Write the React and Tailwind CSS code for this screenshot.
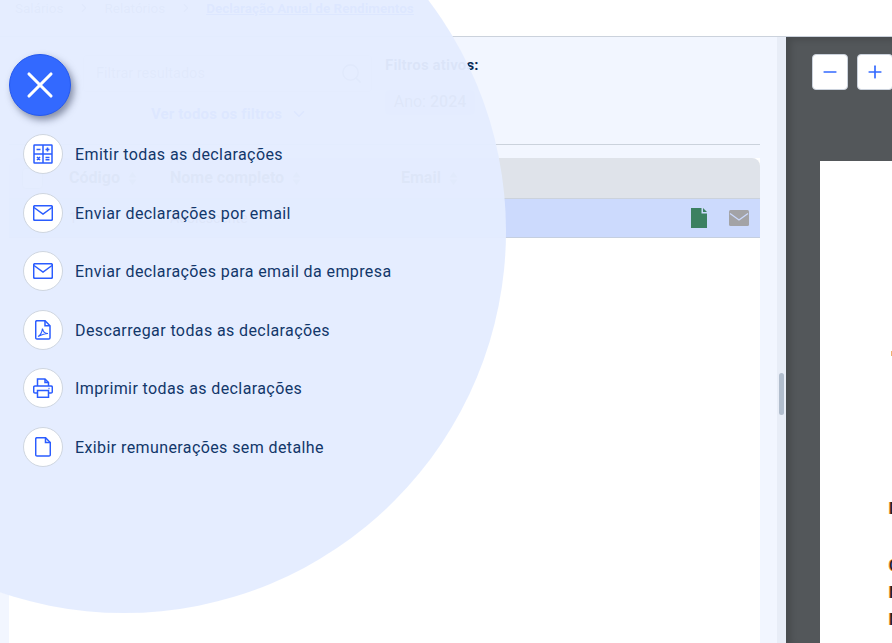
import React from 'react'
import { X, Search, ChevronRight, ChevronDown, Minus, Plus } from 'lucide-react'

const font = { fontFamily: 'Roboto, sans-serif' }

function CalcIcon() {
  return (
    <svg width="20" height="20" viewBox="0 0 20 20" fill="none" stroke="#2a5cff" strokeWidth="1.5">
      <rect x="1" y="1" width="18" height="18" rx="0.5" />
      <path d="M10 1v18M1 10h18" />
      <path d="M3.500 5.500h4M12.500 5.500h4M14.500 3.500v4M12.500 13.500h4M12.500 15.800h4M4 13l3 3M7 13l-3 3" strokeWidth="1.600" />
    </svg>
  )
}

function MailIcon() {
  return (
    <svg width="20" height="16" viewBox="0 0 20 16" fill="none" stroke="#2a5cff" strokeWidth="1.5">
      <rect x="0.700" y="0.700" width="18.600" height="14.600" rx="1.200" />
      <path d="M1 2.500l9 6.500 9-6.500" />
    </svg>
  )
}

function PdfIcon() {
  return (
    <svg width="16" height="20" viewBox="0 0 16 20" fill="none" stroke="#2a5cff" strokeWidth="1.5">
      <path d="M2 .7h8l5 5v12a1.300 1.300 0 0 1-1.300 1.300H2A1.300 1.300 0 0 1 .7 17.700V2A1.300 1.300 0 0 1 2 .7z" />
      <path d="M10 .7v5h5" />
      <path d="M3 16.500c2-1 4-4.500 4.500-8 .5 3 2.500 5 5.500 5-3 0-6 1-10 3z" strokeWidth="1.200" />
    </svg>
  )
}

function PrintIcon() {
  return (
    <svg width="20" height="20" viewBox="0 0 20 20" fill="none" stroke="#2a5cff" strokeWidth="1.5">
      <path d="M4.500 8V1h7.500l3.500 3.500V8" />
      <path d="M12 1v3.500h3.500" />
      <path d="M4.500 15H2a1.300 1.300 0 0 1-1.300-1.300V9.300A1.300 1.300 0 0 1 2 8h16a1.300 1.300 0 0 1 1.300 1.300v4.400A1.300 1.300 0 0 1 18 15h-2.500" />
      <rect x="4.500" y="12.500" width="11" height="6.800" />
      <path d="M15.500 10.500h1" strokeWidth="1.600" />
    </svg>
  )
}

function FileIcon() {
  return (
    <svg width="16" height="20" viewBox="0 0 16 20" fill="none" stroke="#2a5cff" strokeWidth="1.5">
      <path d="M2 .7h8.500l4.800 4.800v12.200a1.300 1.300 0 0 1-1.300 1.300H2A1.300 1.300 0 0 1 .7 17.700V2A1.300 1.300 0 0 1 2 .7z" />
      <path d="M10.500 .7v4.800h4.800" />
    </svg>
  )
}

function SortCarets() {
  return (
    <svg width="9" height="13" viewBox="0 0 9 13" fill="#9aa5b5" className="ml-2">
      <path d="M4.500 0L8.500 5.500H.5zM4.500 13L.5 7.500h8z" />
    </svg>
  )
}

const actions = [
  { label: 'Emitir todas as declarações', icon: <CalcIcon /> },
  { label: 'Enviar declarações por email', icon: <MailIcon /> },
  { label: 'Enviar declarações para email da empresa', icon: <MailIcon /> },
  { label: 'Descarregar todas as declarações', icon: <PdfIcon /> },
  { label: 'Imprimir todas as declarações', icon: <PrintIcon /> },
  { label: 'Exibir remunerações sem detalhe', icon: <FileIcon /> },
]

function Breadcrumbs() {
  return (
    <div className="h-[37px] bg-white border-b border-[#cbd2dc] flex items-start pl-[15px] text-[13.5px] leading-4 text-[#7f8da3]">
      <span>Salários</span>
      <ChevronRight size={14} className="mx-[13.500px] mt-px" />
      <span>Relatórios</span>
      <ChevronRight size={14} className="mx-[13.500px] mt-px" />
      <span className="font-bold text-[#2f62f5] underline">Declaração Anual de Rendimentos</span>
    </div>
  )
}

function Filters() {
  return (
    <div className="h-[108px] ml-[9px] w-[751px] border-b border-[#cbd2dc] flex">
      <div className="w-[289px] ml-[74px] mr-[13px] mt-[18px]">
        <div className="h-[37px] border border-[#d5dae3] rounded bg-white flex items-center justify-between pl-3 pr-2 text-[#8a94a6]">
          <span className="text-[14.500px]">Filtrar resultados</span>
          <Search size={23} strokeWidth={1.600} />
        </div>
        <div className="mt-[11px] pl-1 flex items-center justify-center text-[15px] tracking-[0.15px] font-bold text-[#2f62f5] gap-2">
          Ver todos os filtros <ChevronDown size={18} />
        </div>
      </div>
      <div className="mt-[17px]">
        <div className="text-[15px] tracking-[0.15px] font-bold text-[#0a2a52]">Filtros ativos:</div>
        <div className="mt-[13px] h-[25px] w-[90px] rounded bg-[#e3e8f2] flex items-center justify-center text-base text-[#4a5568]">
          Ano:&nbsp;<span className="font-medium">2024</span>
        </div>
      </div>
    </div>
  )
}

function ResultsTable() {
  return (
    <div className="mx-[9px] flex-1 bg-white">
      <div className="h-[13px] bg-[#f2f6ff]" />
      <div className="h-[41px] bg-[#dfe3ea] rounded-t-lg border-b border-[#cbd2dc] flex items-center text-base font-bold text-[#39465a]">
        <span className="w-[21px] h-[21px] ml-[13px] border border-[#b9c1cd] rounded bg-white" />
        <span className="ml-[26px] w-[101px] flex items-center">Código <SortCarets /></span>
        <span className="w-[231px] flex items-center">Nome completo <SortCarets /></span>
        <span className="flex items-center">Email <SortCarets /></span>
      </div>
      <div className="h-[39px] bg-[#ccdafd] border-b border-[#c5cfe0] flex items-center text-sm text-[#39465a]">
        <span className="ml-[60px] w-[101px]">1</span>
        <span className="flex-1">Adolescente</span>
        <svg width="16" height="20" viewBox="0 0 16 20" className="mr-[22px]">
          <path d="M0 0h10.500V5.500H16V20H0z" fill="#3c8161" />
          <path d="M12 0l4 4h-4z" fill="#3c8161" />
        </svg>
        <svg width="20" height="16" viewBox="0 0 20 16" className="mr-[11px]">
          <rect width="20" height="16" rx="1.500" fill="#a3a3a6" />
          <path d="M1 3.500l9 6.500 9-6.500" fill="none" stroke="#ccdafd" strokeWidth="1.300" />
        </svg>
      </div>
    </div>
  )
}

function PdfViewer() {
  return (
    <div className="flex-1 bg-[#53575a] shadow-[inset_5px_3px_6px_rgba(0,0,0,0.14)] flex flex-col overflow-hidden">
      <div className="h-[124px] flex items-start pt-[17px] pl-[26px] gap-[9px] shrink-0">
        <button className="w-9 h-9 shrink-0 rounded bg-white border border-[#cbd2dc] flex items-center justify-center text-[#3369ff]"><Minus size={20} strokeWidth={2} /></button>
        <button className="w-9 h-9 shrink-0 rounded bg-white border border-[#cbd2dc] flex items-center justify-center text-[#3369ff]"><Plus size={20} strokeWidth={2} /></button>
      </div>
      <div className="flex-1 ml-[34px] bg-white pl-[69px] text-base font-medium text-[#222] [text-shadow:-1px_0_#e99b3c] whitespace-nowrap">
        <div className="h-[336px] pt-[190px]">
          <div className="ml-[2px] w-px h-[5px] bg-[#f0b070]" />
        </div>
        <div>Declaração</div>
        <div className="h-[31px]" />
        <div className="leading-[27px]">Contribuinte</div>
        <div className="leading-[27px]">Nome</div>
        <div className="leading-[27px]">Morada</div>
      </div>
    </div>
  )
}

function ActionsOverlay() {
  return (
    <>
      <div className="absolute left-[-258px] top-[-151px] w-[764px] h-[764px] rounded-full bg-[#e4ecff]/[0.96]" />
      <button className="absolute left-[9px] top-[54px] w-[62px] h-[62px] rounded-full bg-[#3369ff] border border-[#2559ee] shadow-[3px_4px_7px_rgba(40,50,80,0.5)] flex items-center justify-center text-white">
        <X size={44} strokeWidth={1.700} />
      </button>
      <ul className="absolute left-[23px] top-[134px] flex flex-col gap-[18.500px]">
        {actions.map((a) => (
          <li key={a.label} className="flex items-center gap-3 h-10 whitespace-nowrap text-base tracking-[0.4px] text-[#12376a]">
            <span className="w-10 h-10 rounded-full bg-white border border-[#cfd6e0] flex items-center justify-center">{a.icon}</span>
            <span className="pt-[2px]">{a.label}</span>
          </li>
        ))}
      </ul>
    </>
  )
}

export default function App() {
  return (
    <div className="relative w-[892px] h-[643px] overflow-hidden" style={font}>
      <Breadcrumbs />
      <div className="flex h-[606px]">
        <div className="w-[777px] bg-[#f2f6ff] flex flex-col">
          <Filters />
          <div className="flex-1 flex w-[769px]">
            <ResultsTable />
          </div>
        </div>
        <div className="w-[9px] bg-[#e8edf7] relative">
          <div className="absolute left-[2px] top-[336px] w-[5px] h-[42px] rounded-full bg-[#b1bdcd]" />
        </div>
        <PdfViewer />
      </div>
      <ActionsOverlay />
    </div>
  )
}
